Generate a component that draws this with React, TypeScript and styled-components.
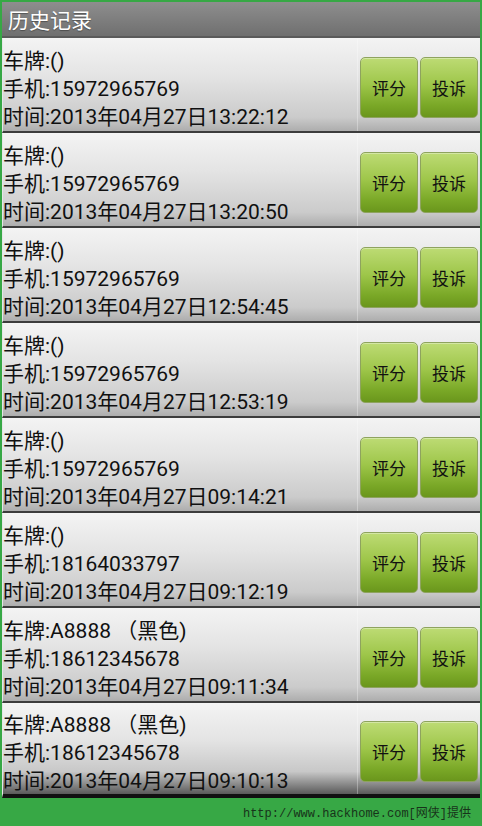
import React from "react";
import styled, { createGlobalStyle } from "styled-components";

type RecordType = {
  plate: string;
  phone: string;
  time: string;
};

const records: Array<RecordType> = [
  { plate: "()", phone: "15972965769", time: "2013年04月27日13:22:12" },
  { plate: "()", phone: "15972965769", time: "2013年04月27日13:20:50" },
  { plate: "()", phone: "15972965769", time: "2013年04月27日12:54:45" },
  { plate: "()", phone: "15972965769", time: "2013年04月27日12:53:19" },
  { plate: "()", phone: "15972965769", time: "2013年04月27日09:14:21" },
  { plate: "()", phone: "18164033797", time: "2013年04月27日09:12:19" },
  { plate: "A8888 （黑色)", phone: "18612345678", time: "2013年04月27日09:11:34" },
  { plate: "A8888 （黑色)", phone: "18612345678", time: "2013年04月27日09:10:13" },
];

export default function App() {
  return (
    <>
      <GlobalStyle />
      <Screen>
        <TitleBar>历史记录</TitleBar>
        <RecordList>
          {records.map((record, i) => (
            <RecordRow key={i} last={i === records.length - 1}>
              <RecordText>
                <Line>车牌:{record.plate}</Line>
                <Line>手机:{record.phone}</Line>
                <Line>时间:{record.time}</Line>
              </RecordText>
              <Actions>
                <ActionButton>评分</ActionButton>
                <ActionButton>投诉</ActionButton>
              </Actions>
            </RecordRow>
          ))}
        </RecordList>
        <Footer>http://www.hackhome.com[网侠]提供</Footer>
      </Screen>
    </>
  );
}

const GlobalStyle = createGlobalStyle`
  html, body {
    margin: 0;
    padding: 0;
    background: #37a845;
  }
`;

const Screen = styled.div`
  width: 482px;
  height: 826px;
  display: flex;
  flex-direction: column;
  padding: 2px 2px 0;
  box-sizing: border-box;
  background: #37a845;
  font-family: Roboto, "Noto Sans CJK SC", sans-serif;
`;

const TitleBar = styled.div`
  height: 34px;
  display: flex;
  align-items: center;
  padding-left: 6px;
  font-size: 21px;
  color: #ffffff;
  text-shadow: 0 1px 1px rgba(0, 0, 0, 0.35);
  background: linear-gradient(#8e8e8e, #6f6f6f);
  border-bottom: 2px solid #5a5a5a;
`;

const RecordList = styled.div`
  display: flex;
  flex-direction: column;
`;

const RecordRow = styled.div<{ last: boolean }>`
  height: 95px;
  box-sizing: border-box;
  display: flex;
  align-items: center;
  justify-content: space-between;
  border-top: 1px solid #f4f4f4;
  border-left: 1px solid #e6e6e6;
  border-bottom: ${({ last }) => (last ? "4px solid #111" : "2px solid #3c3c3c")};
  background: ${({ last }) =>
    last
      ? "linear-gradient(#f3f3f3 0%, #e4e4e4 40%, #c8c8c8 75%, #5a5a5a 100%)"
      : "linear-gradient(#f3f3f3 0%, #e4e4e4 40%, #cbcbcb 85%, #adadad 100%)"};
`;

const RecordText = styled.div`
  display: flex;
  flex-direction: column;
  padding: 7px 0 0 0;
`;

const Line = styled.div`
  font-size: 21px;
  line-height: 28px;
  color: #101010;
  white-space: nowrap;
`;

const Actions = styled.div`
  align-self: stretch;
  display: flex;
  align-items: center;
  gap: 2px;
  padding: 4px 2px 0 2px;
  border-left: 1px solid rgba(255, 255, 255, 0.3);
`;

const ActionButton = styled.button`
  width: 58px;
  height: 61px;
  padding: 0;
  border: 1px solid #8ea35e;
  border-radius: 5px;
  font-family: "Noto Sans CJK SC", sans-serif;
  font-size: 17px;
  color: #111111;
  background: linear-gradient(#bddb74 0%, #9ec64a 45%, #7aa827 80%, #6a961c 100%);
  box-shadow: inset 0 1px 0 rgba(255, 255, 255, 0.35);
`;

const Footer = styled.div`
  flex: 1;
  display: flex;
  align-items: center;
  justify-content: flex-end;
  padding-right: 9px;
  font-family: "Liberation Mono", "Noto Sans CJK SC", monospace;
  font-size: 12px;
  color: #17331a;
`;
